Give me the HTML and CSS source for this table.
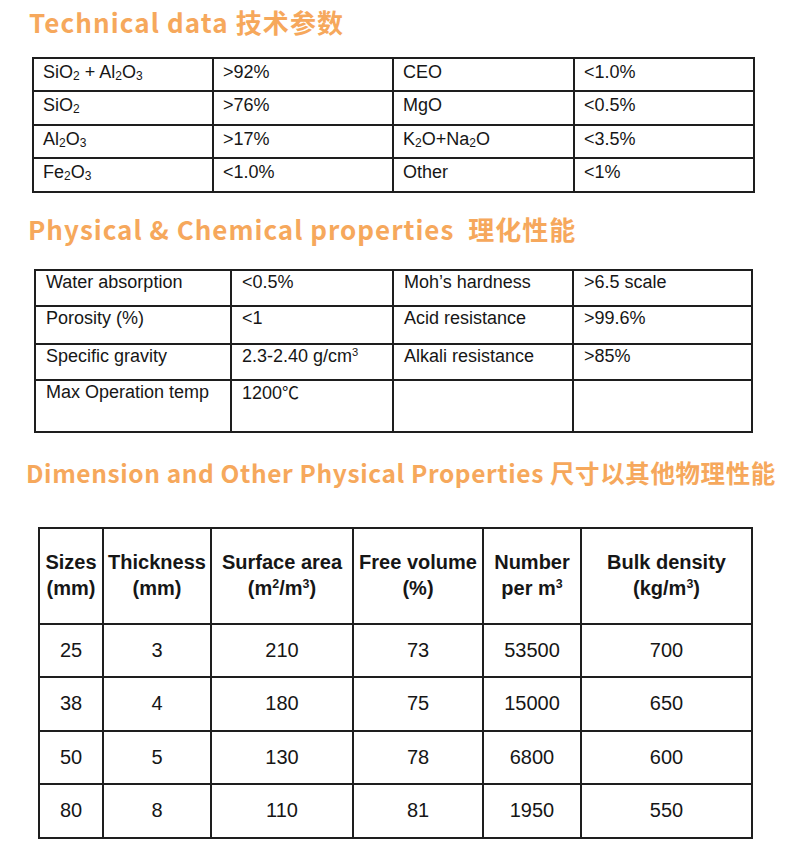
FILE: index.html
```html
<!DOCTYPE html>
<html lang="en">
<head>
<meta charset="utf-8">
<title>Technical data</title>
<link rel="stylesheet" href="styles.css">
</head>
<body>
<main class="page">
  <h2 class="title t1">Technical data 技术参数</h2>
  <div class="grid g1">
    <div class="c">SiO<span class="sb">2</span> + Al<span class="sb">2</span>O<span class="sb">3</span></div>
    <div class="c">&gt;92%</div>
    <div class="c">CEO</div>
    <div class="c">&lt;1.0%</div>
    <div class="c">SiO<span class="sb">2</span></div>
    <div class="c">&gt;76%</div>
    <div class="c">MgO</div>
    <div class="c">&lt;0.5%</div>
    <div class="c">Al<span class="sb">2</span>O<span class="sb">3</span></div>
    <div class="c">&gt;17%</div>
    <div class="c">K<span class="sb">2</span>O+Na<span class="sb">2</span>O</div>
    <div class="c">&lt;3.5%</div>
    <div class="c">Fe<span class="sb">2</span>O<span class="sb">3</span></div>
    <div class="c">&lt;1.0%</div>
    <div class="c">Other</div>
    <div class="c">&lt;1%</div>
  </div>

  <h2 class="title t2">Physical &amp; Chemical properties&nbsp; 理化性能</h2>
  <div class="grid g2">
    <div class="c">Water absorption</div>
    <div class="c">&lt;0.5%</div>
    <div class="c">Moh’s hardness</div>
    <div class="c">&gt;6.5 scale</div>
    <div class="c">Porosity (%)</div>
    <div class="c">&lt;1</div>
    <div class="c">Acid resistance</div>
    <div class="c">&gt;99.6%</div>
    <div class="c">Specific gravity</div>
    <div class="c">2.3-2.40 g/cm<span class="sp">3</span></div>
    <div class="c">Alkali resistance</div>
    <div class="c">&gt;85%</div>
    <div class="c">Max Operation temp</div>
    <div class="c">1200<span class="deg">℃</span></div>
    <div class="c"></div>
    <div class="c"></div>
  </div>

  <h2 class="title t3">Dimension and Other Physical Properties 尺寸以其他物理性能</h2>
  <div class="grid g3">
    <div class="c h"><span>Sizes<br>(mm)</span></div>
    <div class="c h"><span>Thickness<br>(mm)</span></div>
    <div class="c h"><span>Surface area<br>(m<span class="sp">2</span>/m<span class="sp">3</span>)</span></div>
    <div class="c h"><span>Free volume<br>(%)</span></div>
    <div class="c h"><span>Number<br>per m<span class="sp">3</span></span></div>
    <div class="c h"><span>Bulk density<br>(kg/m<span class="sp">3</span>)</span></div>

    <div class="c">25</div><div class="c">3</div><div class="c">210</div><div class="c">73</div><div class="c">53500</div><div class="c">700</div>
    <div class="c">38</div><div class="c">4</div><div class="c">180</div><div class="c">75</div><div class="c">15000</div><div class="c">650</div>
    <div class="c">50</div><div class="c">5</div><div class="c">130</div><div class="c">78</div><div class="c">6800</div><div class="c">600</div>
    <div class="c">80</div><div class="c">8</div><div class="c">110</div><div class="c">81</div><div class="c">1950</div><div class="c">550</div>
  </div>
</main>
</body>
</html>
```

FILE: styles.css
```css
* { box-sizing: border-box; }

html, body {
  margin: 0;
  padding: 0;
  background: #ffffff;
}

.page {
  display: flow-root;
  width: 790px;
  padding-bottom: 20px;
}

.title {
  margin: 0;
  font-family: "Noto Sans CJK SC", "Noto Sans", sans-serif;
  font-weight: 700;
  color: #f6a85c;
  white-space: nowrap;
}

.t1 {
  font-size: 26px;
  line-height: 36px;
  letter-spacing: 1.1px;
  margin: 4px 0 0 29px;
}

.t2 {
  font-size: 26px;
  line-height: 36px;
  letter-spacing: 1px;
  margin: 18px 0 0 28px;
}

.t3 {
  font-size: 24.5px;
  line-height: 34px;
  letter-spacing: 0.6px;
  margin: 23px 0 0 26px;
}

.grid {
  display: grid;
  border-top: 2px solid #1e1e1e;
  border-left: 2px solid #1e1e1e;
  font-family: "Liberation Sans", Arial, sans-serif;
  color: #161616;
  width: max-content;
}

.c {
  border-right: 2px solid #1e1e1e;
  border-bottom: 2px solid #1e1e1e;
  font-size: 18px;
  line-height: 20px;
  padding: 3px 8px 0 9px;
  white-space: nowrap;
}

.g1 {
  margin: 17px 0 0 32px;
  grid-template-columns: 180px 180px 181px 180px;
  grid-template-rows: 33px 34px 33px 34px;
}

.g2 {
  margin: 22px 0 0 34px;
  grid-template-columns: 196px 162px 180px 179px;
  grid-template-rows: 36px 38px 36px 52px;
}

.g2 .c {
  padding-top: 1px;
  padding-left: 10px;
}

.g3 {
  margin: 37px 0 0 38px;
  grid-template-columns: 64px 108px 142px 130px 98px 171px;
  grid-template-rows: 96px 53px 54px 53px 54px;
}

.g3 .c {
  font-size: 20px;
  line-height: 26px;
  padding: 0 0 2px;
  display: flex;
  align-items: center;
  justify-content: center;
  text-align: center;
}

.g3 .h {
  font-weight: 700;
}

.sb {
  font-size: 12px;
  vertical-align: -2px;
  line-height: 0;
}

.sp {
  font-size: 0.62em;
  vertical-align: 0.55em;
  line-height: 0;
}

.deg {
  font-family: "Noto Sans CJK SC", sans-serif;
  font-size: 17px;
}
```
